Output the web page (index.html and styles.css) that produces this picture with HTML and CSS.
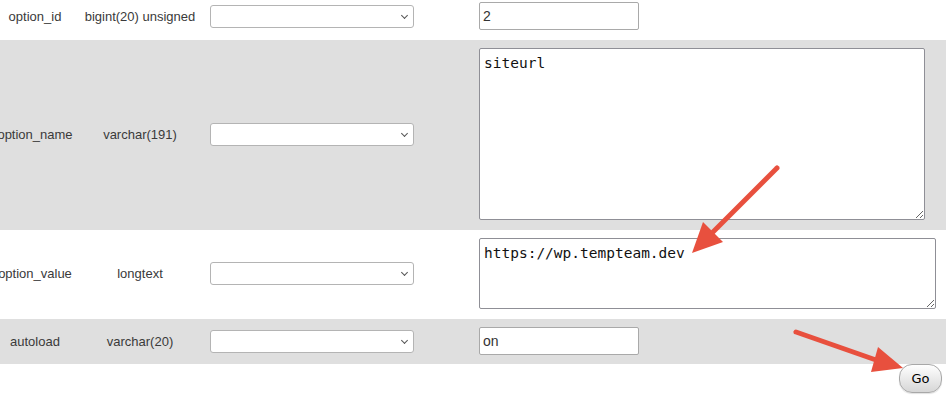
FILE: index.html
```html
<!DOCTYPE html>
<html lang="en">
<head>
  <meta charset="UTF-8" />
  <meta name="viewport" content="width=device-width, initial-scale=1.0" />
  <title>Insert row</title>
  <link rel="stylesheet" href="styles.css">
</head>
<body>
  <form class="insert-form">
    <table class="insert-table">
      <colgroup>
        <col class="col-name">
        <col class="col-type">
        <col class="col-func">
        <col class="col-value">
      </colgroup>
      <tbody>
        <tr>
          <td class="field-name">option_id</td>
          <td class="field-type">bigint(20) unsigned</td>
          <td class="field-func"><span class="select-wrap"><select class="func-select"><option></option></select></span></td>
          <td class="field-value"><input type="text" class="value-input" value="2"></td>
        </tr>
        <tr>
          <td class="field-name">option_name</td>
          <td class="field-type">varchar(191)</td>
          <td class="field-func"><span class="select-wrap"><select class="func-select"><option></option></select></span></td>
          <td class="field-value"><textarea class="value-text tall">siteurl</textarea></td>
        </tr>
        <tr>
          <td class="field-name">option_value</td>
          <td class="field-type">longtext</td>
          <td class="field-func"><span class="select-wrap"><select class="func-select"><option></option></select></span></td>
          <td class="field-value"><textarea class="value-text short">https://wp.tempteam.dev</textarea></td>
        </tr>
        <tr>
          <td class="field-name">autoload</td>
          <td class="field-type">varchar(20)</td>
          <td class="field-func"><span class="select-wrap"><select class="func-select"><option></option></select></span></td>
          <td class="field-value"><input type="text" class="value-input" value="on"></td>
        </tr>
      </tbody>
    </table>
    <div class="form-actions">
      <button type="button" class="go-button">Go</button>
    </div>
  </form>

  <!-- red annotation arrows drawn over the form -->
  <svg class="annotations" width="952" height="404" viewBox="0 0 952 404">
    <line x1="777" y1="168" x2="712" y2="233" />
    <polygon points="692,253 703,222 723,242" />
    <line x1="796" y1="332" x2="876" y2="360" />
    <polygon points="903,368 878,347 871,372" />
  </svg>
</body>
</html>
```

FILE: styles.css
```css
html, body {
  margin: 0;
  padding: 0;
  background-color: #fff;
  overflow: hidden;
}
body {
  position: relative;
  width: 952px;
  height: 404px;
  font-family: "Liberation Sans", Arial, sans-serif;
  font-size: 13px;
  color: #3a3a3a;
}

.insert-table {
  table-layout: fixed;
  width: 954px;
  margin: -6px 0 0 -8px;
  border-collapse: collapse;
  border-spacing: 0;
}
.col-name { width: 86px; }
.col-type { width: 124px; }
.col-func { width: 269px; }
.col-value { width: 475px; }

.insert-table td {
  padding: 8px 8px 10px 8px;
  vertical-align: middle;
}
.insert-table tr:last-child td {
  padding-bottom: 9px;
}
.insert-table tr:nth-child(even) {
  background-color: #dfdfdf;
}
.insert-table td.field-name,
.insert-table td.field-type {
  padding-left: 0;
  padding-right: 0;
  text-align: center;
  white-space: nowrap;
}

/* select with a thin chevron, like the reference */
.select-wrap {
  position: relative;
  display: block;
  width: 204px;
}
.select-wrap::after {
  content: '';
  position: absolute;
  right: 7px;
  top: 8px;
  width: 4px;
  height: 4px;
  border-right: 1.5px solid #555;
  border-bottom: 1.5px solid #555;
  transform: rotate(45deg);
  pointer-events: none;
}
.func-select {
  display: block;
  width: 204px;
  height: 23px;
  margin: 0;
  padding: 0 4px;
  border: 1px solid #b4b4b4;
  border-radius: 3px;
  background-color: #fff;
  font-family: "Liberation Sans", Arial, sans-serif;
  font-size: 13px;
  box-sizing: border-box;
  appearance: none;
  -webkit-appearance: none;
}

.value-input {
  display: block;
  width: 160px;
  height: 28px;
  margin: 0;
  padding: 0 3px;
  border: 1px solid #a9a9a9;
  border-radius: 2px;
  background-color: #fff;
  font-family: "Liberation Sans", Arial, sans-serif;
  font-size: 14px;
  color: #333;
  box-sizing: border-box;
}

.value-text {
  display: block;
  margin: 0;
  padding: 6px 4px 5px;
  border: 1px solid #8f8f96;
  border-radius: 2px;
  background-color: #fff;
  font-family: "DejaVu Sans Mono", "Liberation Mono", monospace;
  font-size: 14.5px;
  color: #111;
  box-sizing: border-box;
}
.value-text.tall {
  width: 446px;
  height: 172px;
}
.value-text.short {
  width: 457px;
  height: 71px;
}

.form-actions {
  display: flex;
  justify-content: flex-end;
  width: 946px;
  padding-right: 4px;
  box-sizing: border-box;
}
.go-button {
  width: 43px;
  height: 29px;
  padding: 0;
  border: 1px solid #a8a8a8;
  border-radius: 13px;
  background: linear-gradient(#ffffff, #d6d6d6);
  box-shadow: 0 1px 1px rgba(0, 0, 0, 0.12);
  font-family: "DejaVu Sans", Verdana, sans-serif;
  font-size: 13px;
  color: #000;
  cursor: pointer;
}

.annotations {
  position: absolute;
  top: 0;
  left: 0;
  pointer-events: none;
}
.annotations line {
  stroke: #e8503e;
  stroke-width: 5;
  stroke-linecap: round;
}
.annotations polygon {
  fill: #e8503e;
}
```
